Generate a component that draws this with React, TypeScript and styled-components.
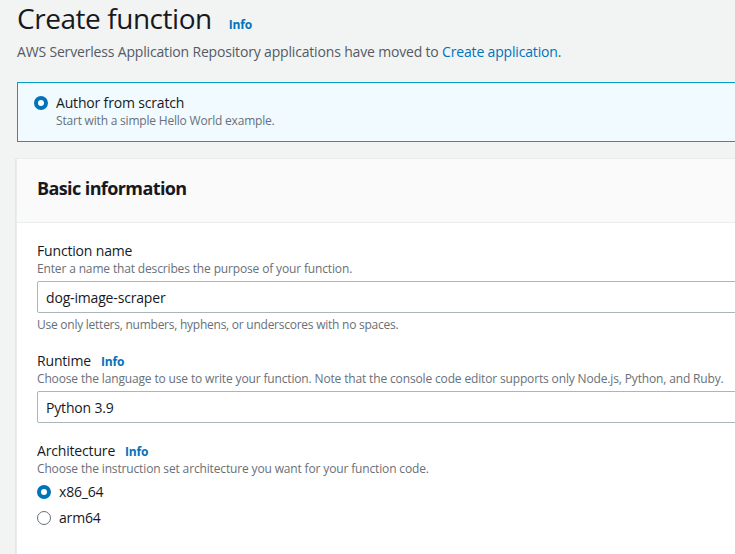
import React from "react";
import styled, { createGlobalStyle } from "styled-components";

const Global = createGlobalStyle`
  html, body { margin: 0; padding: 0; background: #f2f3f3; overflow: hidden; }
  body { font-family: "Open Sans", "Noto Sans", Arial, sans-serif; color: #16191f; }
`;

const Page = styled.div`
  width: 900px;
  padding: 0 0 0 17px;
  display: flex;
  flex-direction: column;
`;

const TitleRow = styled.div`
  display: flex;
  align-items: baseline;
  gap: 17px;
  height: 36px;
`;

const Title = styled.h1`
  margin: 0;
  font-size: 28px;
  font-weight: 400;
  line-height: 36px;
  letter-spacing: -0.45px;
  color: #16191f;
`;

const InfoLink = styled.a`
  font-size: 12px;
  font-weight: 700;
  letter-spacing: -0.2px;
  color: #0073bb;
  text-decoration: none;
`;

const Subtitle = styled.p`
  margin: 6px 0 0 0;
  font-size: 14px;
  line-height: 20px;
  letter-spacing: -0.17px;
  color: #545b64;
`;

const Link = styled.a`
  color: #0073bb;
  text-decoration: none;
`;

const OptionBox = styled.div`
  margin-top: 20px;
  border: 1px solid #00a1c9;
  background: #f1faff;
  padding: 10px 16px 12px 16px;
  display: flex;
  gap: 8px;
`;

const RadioDot = styled.span<{ $checked?: boolean }>`
  flex: none;
  box-sizing: border-box;
  width: 14px;
  height: 14px;
  border-radius: 50%;
  margin-top: 3px;
  border: ${(p) => (p.$checked ? "4px solid #0073bb" : "1.5px solid #687078")};
  background: #fff;
`;

const OptionText = styled.div`
  display: flex;
  flex-direction: column;
`;

const OptionLabel = styled.span`
  font-size: 14px;
  line-height: 20px;
  letter-spacing: -0.17px;
  color: #16191f;
`;

const OptionDesc = styled.span`
  font-size: 12px;
  line-height: 16px;
  letter-spacing: -0.2px;
  color: #687078;
`;

const Card = styled.section`
  margin: 16px 0 0 -1px;
  background: #fff;
  border: 1px solid #eaeded;
  box-shadow: 0 1px 1px 0 rgba(0, 28, 36, 0.3);
`;

const CardHeader = styled.div`
  background: #fafafa;
  border-bottom: 1px solid #eaeded;
  padding: 17px 20px 22px 20px;
`;

const CardTitle = styled.h2`
  margin: 0;
  font-size: 18px;
  font-weight: 700;
  line-height: 24px;
  letter-spacing: -0.6px;
  color: #16191f;
`;

const CardBody = styled.div`
  padding: 18px 20px 40px 20px;
  display: flex;
  flex-direction: column;
  gap: 18px;
`;

const Field = styled.div`
  display: flex;
  flex-direction: column;
`;

const LabelRow = styled.div`
  display: flex;
  align-items: baseline;
  gap: 10px;
`;

const Label = styled.label`
  font-size: 14px;
  line-height: 20px;
  letter-spacing: -0.17px;
  color: #16191f;
`;

const Desc = styled.div`
  font-size: 12px;
  line-height: 16px;
  letter-spacing: -0.15px;
  color: #687078;
  white-space: nowrap;
`;

const Input = styled.div`
  margin-top: 4px;
  height: 30px;
  border: 1px solid #aab7b8;
  border-radius: 2px;
  padding: 0 8px;
  display: flex;
  align-items: center;
  font-size: 14px;
  letter-spacing: -0.17px;
  color: #16191f;
  background: #fff;
`;

const Constraint = styled.div`
  margin-top: 4px;
  font-size: 12px;
  line-height: 16px;
  letter-spacing: -0.25px;
  color: #687078;
`;

const RadioList = styled.div`
  margin-top: 5px;
  display: flex;
  flex-direction: column;
  gap: 6px;
`;

const RadioRow = styled.label`
  display: flex;
  align-items: flex-start;
  gap: 8px;
  font-size: 14px;
  line-height: 20px;
  letter-spacing: -0.17px;
  color: #16191f;
`;

export default function App() {
  return (
    <>
      <Global />
      <Page>
        <TitleRow>
          <Title>Create function</Title>
          <InfoLink>Info</InfoLink>
        </TitleRow>
        <Subtitle>
          AWS Serverless Application Repository applications have moved to{" "}
          <Link>Create application</Link>.
        </Subtitle>
        <OptionBox>
          <RadioDot $checked />
          <OptionText>
            <OptionLabel>Author from scratch</OptionLabel>
            <OptionDesc>Start with a simple Hello World example.</OptionDesc>
          </OptionText>
        </OptionBox>
        <Card>
          <CardHeader>
            <CardTitle>Basic information</CardTitle>
          </CardHeader>
          <CardBody>
            <Field>
              <Label>Function name</Label>
              <Desc>Enter a name that describes the purpose of your function.</Desc>
              <Input>dog-image-scraper</Input>
              <Constraint>Use only letters, numbers, hyphens, or underscores with no spaces.</Constraint>
            </Field>
            <Field>
              <LabelRow>
                <Label>Runtime</Label>
                <InfoLink>Info</InfoLink>
              </LabelRow>
              <Desc>
                Choose the language to use to write your function. Note that the console code editor supports only Node.js, Python, and Ruby.
              </Desc>
              <Input>Python 3.9</Input>
            </Field>
            <Field>
              <LabelRow>
                <Label>Architecture</Label>
                <InfoLink>Info</InfoLink>
              </LabelRow>
              <Desc>Choose the instruction set architecture you want for your function code.</Desc>
              <RadioList>
                <RadioRow>
                  <RadioDot $checked />
                  x86_64
                </RadioRow>
                <RadioRow>
                  <RadioDot />
                  arm64
                </RadioRow>
              </RadioList>
            </Field>
          </CardBody>
        </Card>
      </Page>
    </>
  );
}
